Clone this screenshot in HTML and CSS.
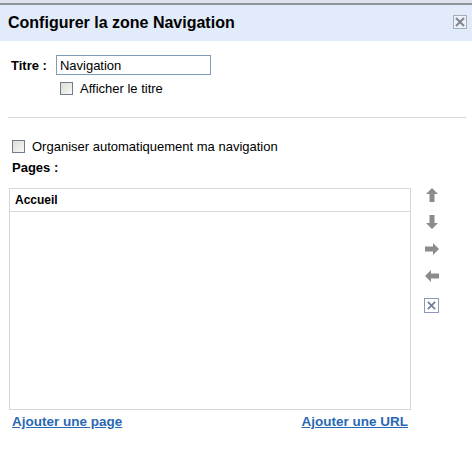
FILE: index.html
```html
<!DOCTYPE html>
<html lang="fr">
<head>
  <meta charset="UTF-8">
  <title>Configurer la zone Navigation</title>
  <link rel="stylesheet" href="styles.css">
</head>
<body>
  <div class="topbar"></div>

  <!-- En-tête -->
  <div class="dialog-header">
    <h1>Configurer la zone Navigation</h1>
    <button class="close-btn" title="Fermer">
      <svg width="10" height="10" viewBox="0 0 10 10"><path d="M1 1L9 9M9 1L1 9" stroke="#7d8594" stroke-width="2"/></svg>
    </button>
  </div>

  <div class="dialog-body">
    <div class="title-row">
      <label class="field-label" for="titre">Titre :</label>
      <input id="titre" class="text-input" type="text" value="Navigation">
    </div>
    <label class="check-row indent">
      <input type="checkbox" class="check">
      <span>Afficher le titre</span>
    </label>

    <hr class="sep">

    <label class="check-row auto">
      <input type="checkbox" class="check">
      <span>Organiser automatiquement ma navigation</span>
    </label>
    <div class="field-label pages-label">Pages :</div>

    <div class="pages">
      <div class="page-list">
        <div class="page-item">Accueil</div>
      </div>
      <div class="tools">
        <button class="tool" title="Monter">
          <svg width="12" height="14" viewBox="0 0 12 14"><path d="M6 0L12 6H8.5V14H3.5V6H0Z" fill="#8c8c8c"/></svg>
        </button>
        <button class="tool" title="Descendre">
          <svg width="12" height="14" viewBox="0 0 12 14"><path d="M6 14L12 8H8.5V0H3.5V8H0Z" fill="#8c8c8c"/></svg>
        </button>
        <button class="tool" title="Droite">
          <svg width="14" height="12" viewBox="0 0 14 12"><path d="M14 6L8 0V3.5H0V8.5H8V12Z" fill="#8c8c8c"/></svg>
        </button>
        <button class="tool" title="Gauche">
          <svg width="14" height="12" viewBox="0 0 14 12"><path d="M0 6L6 0V3.5H14V8.5H6V12Z" fill="#8c8c8c"/></svg>
        </button>
        <button class="tool delete" title="Supprimer">
          <svg width="9" height="9" viewBox="0 0 10 10"><path d="M1 1L9 9M9 1L1 9" stroke="#6f7f9c" stroke-width="2"/></svg>
        </button>
      </div>
    </div>

    <div class="links">
      <a href="#">Ajouter une page</a>
      <a href="#">Ajouter une URL</a>
    </div>
  </div>
</body>
</html>
```

FILE: styles.css
```css
* {
  margin: 0;
  padding: 0;
  box-sizing: border-box;
}

body {
  font-family: "Liberation Sans", Arial, sans-serif;
  font-size: 13px;
  color: #000;
  background: #fff;
}

/* Barre du haut */
.topbar {
  height: 5px;
  background: #dde2ee;
  border-bottom: 2px solid #8d929b;
}

.dialog-header {
  height: 36px;
  background: #e1ebf9;
  display: flex;
  align-items: center;
  justify-content: space-between;
  padding: 0 5px 0 8px;
}

.dialog-header h1 {
  font-size: 16px;
  font-weight: bold;
  margin-top: -1px;
}

.close-btn {
  width: 14px;
  height: 14px;
  border: 1px solid #a7adb8;
  background: #eef2f8;
  display: flex;
  align-items: center;
  justify-content: center;
  cursor: pointer;
  margin-top: -2px;
}

/* Corps */
.dialog-body {
  padding: 14px 6px 0 9px;
}

.title-row {
  display: flex;
  align-items: center;
  gap: 9px;
  padding-left: 2px;
}

.field-label {
  font-weight: bold;
}

.text-input {
  width: 155px;
  height: 20px;
  border: 1px solid #7f9db9;
  font-family: inherit;
  font-size: 13px;
  padding: 0 3px;
  outline: none;
}

.check-row {
  display: flex;
  align-items: center;
  gap: 7px;
}

.check-row.indent {
  margin-top: 6px;
  padding-left: 51px;
}

.check {
  appearance: none;
  width: 13px;
  height: 13px;
  border: 1px solid #707d8f;
  background: linear-gradient(135deg, #dcdcd6, #f8f8f6);
  flex-shrink: 0;
}

.sep {
  border: none;
  border-top: 1px solid #d4d7dc;
  margin: 21px 0 21px -1px;
}

.check-row.auto {
  padding-left: 3px;
}

.pages-label {
  margin: 6px 0 0 3px;
}

/* Liste des pages */
.pages {
  display: flex;
  margin-top: 13px;
}

.page-list {
  width: 402px;
  height: 222px;
  border: 1px solid #d6d6d6;
}

.page-item {
  font-size: 12px;
  font-weight: bold;
  padding: 4px 5px;
  height: 23px;
  border-bottom: 1px solid #d6d6d6;
}

.tools {
  display: flex;
  flex-direction: column;
  align-items: center;
  gap: 13px;
  width: 38px;
  padding-left: 3px;
}

.tool {
  border: none;
  background: none;
  width: 16px;
  height: 14px;
  display: flex;
  align-items: center;
  justify-content: center;
  cursor: pointer;
}

.tool.delete {
  margin-top: 2px;
  width: 15px;
  height: 15px;
  border: 1px solid #8c9ab6;
  background: #fff;
}

/* Liens */
.links {
  display: flex;
  justify-content: space-between;
  width: 402px;
  padding: 4px 3px 0 3px;
}

.links a {
  color: #2a68b4;
  font-size: 13.5px;
  font-weight: bold;
  text-decoration: underline;
}
```
